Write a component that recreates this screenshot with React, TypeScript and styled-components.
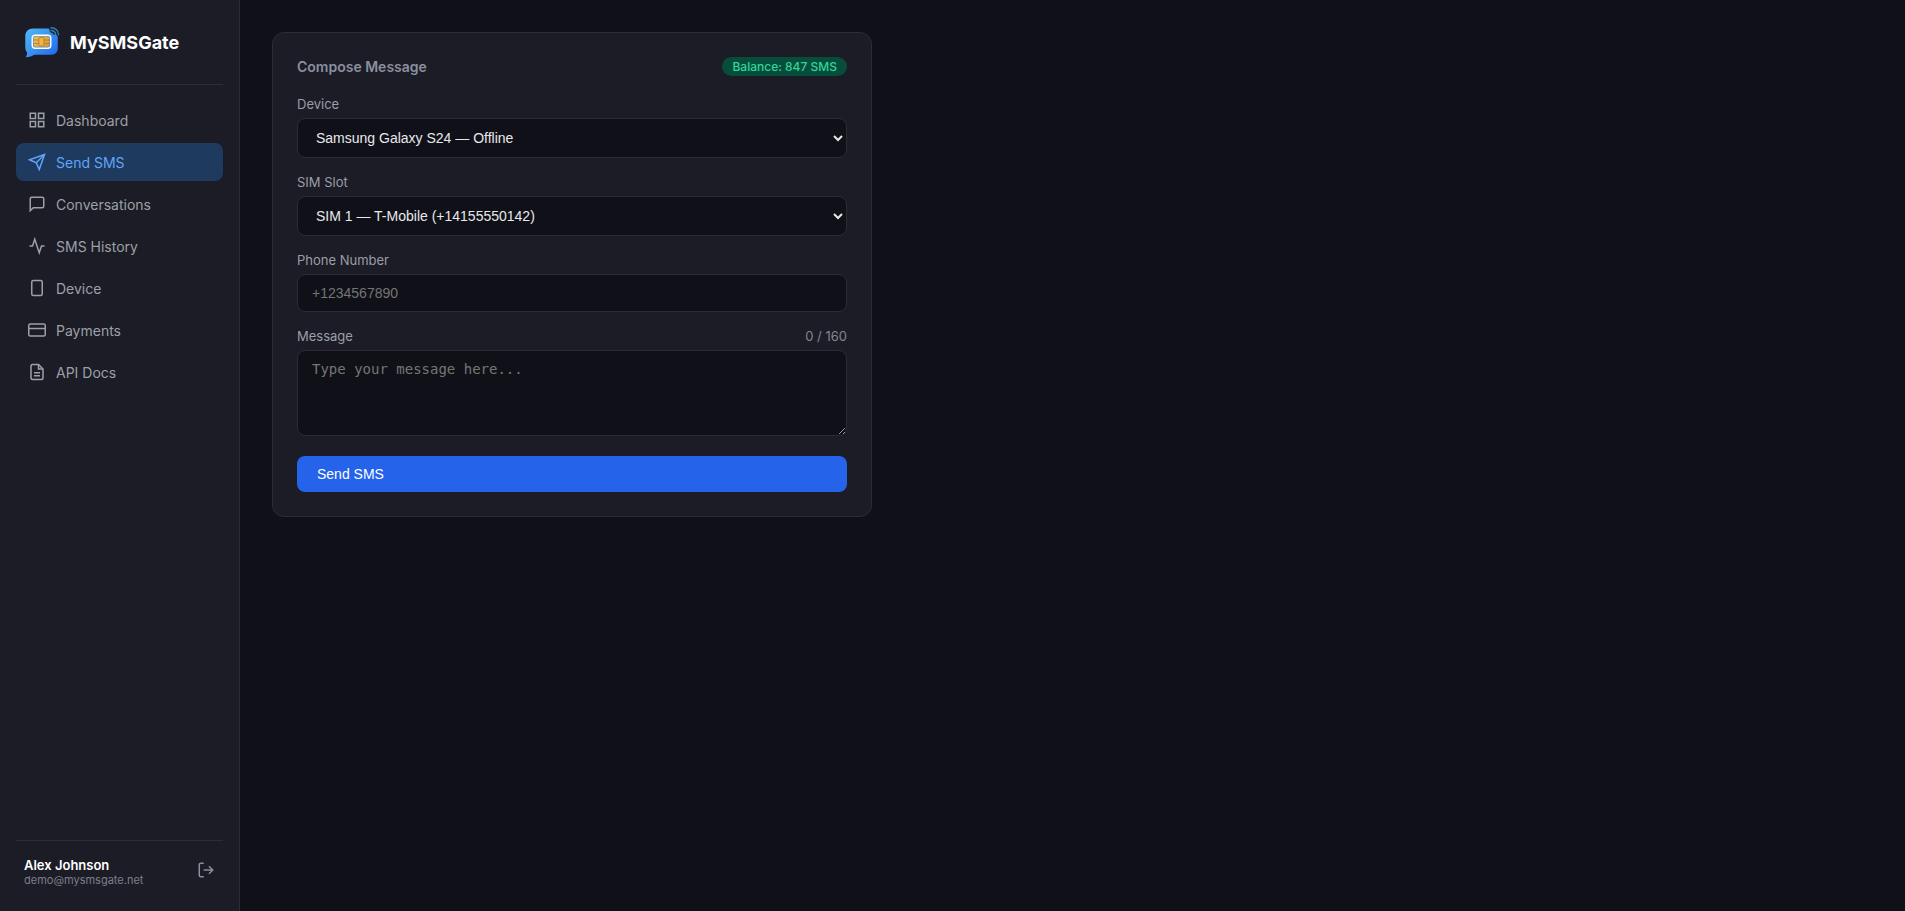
import React, { useState } from 'react';
import styled, { createGlobalStyle } from 'styled-components';

const GlobalStyle = createGlobalStyle`
  *, *::before, *::after { box-sizing: border-box; }
  body {
    margin: 0;
    background: #101118;
    color: #e4e4e7;
    font-family: Inter, "Liberation Sans", sans-serif;
    font-size: 14px;
  }
`;

const Shell = styled.div`
  display: flex;
  min-height: 100vh;
`;

const Sidebar = styled.aside`
  display: flex;
  flex-direction: column;
  flex: 0 0 240px;
  padding: 24px 16px;
  background: #1b1c25;
  border-right: 1px solid #2b2c34;
`;

const Brand = styled.a`
  display: flex;
  align-items: center;
  gap: 10px;
  padding: 0 8px 24px;
  margin-bottom: 16px;
  border-bottom: 1px solid #2b2c34;
  color: #ffffff;
  font-size: 18px;
  font-weight: 700;
  text-decoration: none;
`;

const Nav = styled.nav`
  display: flex;
  flex-direction: column;
  gap: 4px;
  flex: 1;
`;

const NavLink = styled.a<{ $active?: boolean }>`
  display: flex;
  align-items: center;
  gap: 10px;
  padding: 10px 12px;
  border-radius: 8px;
  background: ${(p) => (p.$active ? '#1e3a5f' : 'transparent')};
  color: ${(p) => (p.$active ? '#60a5fa' : '#9ca0a8')};
  font-size: 14px;
  line-height: 17px;
  text-decoration: none;
`;

const Footer = styled.footer`
  display: flex;
  justify-content: space-between;
  align-items: flex-start;
  padding: 16px 8px 0;
  border-top: 1px solid #2b2c34;
`;

const UserName = styled.div`
  color: #ffffff;
  font-size: 13px;
  font-weight: 600;
  line-height: 17px;
`;

const UserEmail = styled.div`
  color: #7b7f8a;
  font-size: 11px;
  line-height: 13px;
`;

const IconButton = styled.button`
  display: flex;
  padding: 4px 0;
  border: 0;
  background: none;
  color: #8b8f9a;
  cursor: pointer;
`;

const Main = styled.main`
  flex: 1;
  min-width: 0;
  padding: 32px;
`;

const Card = styled.form`
  max-width: 600px;
  padding: 24px;
  background: #1b1c25;
  border: 1px solid #2b2c34;
  border-radius: 12px;
`;

const CardHeader = styled.div`
  display: flex;
  justify-content: space-between;
  align-items: center;
  margin-bottom: 20px;
`;

const CardTitle = styled.h1`
  margin: 0;
  color: #8b8f9e;
  font-size: 14px;
  font-weight: 600;
  line-height: 17px;
`;

const Badge = styled.span`
  padding: 2px 10px;
  border-radius: 10px;
  background: #064e3b;
  color: #34d399;
  font-size: 12px;
  font-weight: 500;
  line-height: 15px;
`;

const Field = styled.div`
  display: flex;
  flex-direction: column;
  gap: 5px;
  margin-bottom: 16px;
`;

const LabelRow = styled.div`
  display: flex;
  justify-content: space-between;
  color: #9a9ea8;
  font-size: 13px;
  line-height: 17px;
`;

const Counter = styled.span`
  color: #83868f;
`;

const controlStyle = `
  width: 100%;
  padding: 10px 14px;
  border: 1px solid #2b2c34;
  border-radius: 8px;
  background: #101118;
  color: #e8e8ec;
  font-size: 14px;
  outline: none;
`;

const Select = styled.select`
  ${controlStyle}
  height: 40px;
  font-family: "Liberation Sans", Arial, sans-serif;
`;

const Input = styled.input`
  ${controlStyle}
  height: 38px;
  font-family: "Liberation Sans", Arial, sans-serif;
  &::placeholder { color: #757575; }
`;

const TextArea = styled.textarea`
  ${controlStyle}
  height: 86px;
  margin-bottom: 4px;
  font-family: "DejaVu Sans Mono", monospace;
  resize: vertical;
  &::placeholder { color: #757575; }
`;

const SubmitButton = styled.button`
  display: block;
  width: 100%;
  padding: 10px 20px;
  border: 0;
  border-radius: 8px;
  background: #2563eb;
  color: #ffffff;
  font-family: "Liberation Sans", Arial, sans-serif;
  font-size: 14px;
  font-weight: 500;
  line-height: 16px;
  text-align: left;
  cursor: pointer;
`;

const Icon = ({ children }: { children: React.ReactNode }) => (
  <svg
    width="18"
    height="18"
    viewBox="0 0 24 24"
    fill="none"
    stroke="currentColor"
    strokeWidth="2"
    aria-hidden="true"
  >
    {children}
  </svg>
);

const Logo = () => (
  <svg width="36" height="36" viewBox="0 0 36 36" fill="none" aria-hidden="true">
    <defs>
      <linearGradient id="bubble" x1="4" y1="4" x2="32" y2="32" gradientUnits="userSpaceOnUse">
        <stop stopColor="#4fb9f5" />
        <stop offset="1" stopColor="#2268ee" />
      </linearGradient>
      <linearGradient id="chip" x1="9" y1="12" x2="26" y2="23" gradientUnits="userSpaceOnUse">
        <stop stopColor="#efc060" />
        <stop offset="1" stopColor="#d39a35" />
      </linearGradient>
    </defs>
    <path
      d="M9 4.500h16.200c.2 3.700 2.600 6.100 7.300 6.500.900.800 1.300 1.600 1.300 2.500V24c0 4-2.500 6.700-6.500 6.700H10c-1.600 1.500-4.500 2.300-8.500 2.500 1.300-1.500 1.800-3.200 1.500-5-1-1.200-1.700-2.700-1.700-4.500V12C1.300 7.500 4.500 4.500 9 4.500z"
      fill="url(#bubble)"
    />
    <rect x="8.200" y="11.200" width="18.600" height="13" rx="3" fill="#4a88cc" stroke="#fff" strokeWidth="1.400" />
    <rect x="9.600" y="12.600" width="15.800" height="10.200" rx="2" fill="url(#chip)" />
    <path
      d="M9.600 16h5.200M9.600 19.500h5.200M20 16h5.400M20 19.500h5.400"
      stroke="#9a6a1c"
      strokeWidth=".6"
    />
    <rect x="14.800" y="13.500" width="5.200" height="8.500" rx="1.500" fill="#f0b541" stroke="#9a6a1c" strokeWidth=".6" />
    <path
      d="M27 3.700c4.200-.1 7.300 2.800 7.500 7M27 6.500c2.700 0 4.500 1.700 4.700 4.300"
      stroke="#367fae"
      strokeWidth="1.400"
      strokeLinecap="round"
    />
    <circle cx="28" cy="9.600" r="1" fill="#367fae" />
  </svg>
);

const navItems = [
  {
    label: 'Dashboard',
    icon: (
      <>
        <rect x="3" y="3" width="7" height="7" />
        <rect x="14" y="3" width="7" height="7" />
        <rect x="3" y="14" width="7" height="7" />
        <rect x="14" y="14" width="7" height="7" />
      </>
    ),
  },
  {
    label: 'Send SMS',
    active: true,
    icon: (
      <>
        <path d="M22 2L11 13" />
        <path d="M22 2l-7 20-4-9-9-4 20-7z" />
      </>
    ),
  },
  {
    label: 'Conversations',
    icon: <path d="M21 15a2 2 0 0 1-2 2H7l-4 4V5a2 2 0 0 1 2-2h14a2 2 0 0 1 2 2z" />,
  },
  { label: 'SMS History', icon: <path d="M22 12h-4l-3 9L9 3l-3 9H2" /> },
  { label: 'Device', icon: <rect x="5" y="2" width="14" height="20" rx="2" /> },
  {
    label: 'Payments',
    icon: (
      <>
        <rect x="1" y="4" width="22" height="16" rx="2" />
        <path d="M1 10h22" />
      </>
    ),
  },
  {
    label: 'API Docs',
    icon: (
      <>
        <path d="M14 2H6a2 2 0 0 0-2 2v16a2 2 0 0 0 2 2h12a2 2 0 0 0 2-2V8z" />
        <path d="M14 2v6h6M16 13H8M16 17H8" />
      </>
    ),
  },
];

export default function App() {
  const [message, setMessage] = useState('');

  return (
    <>
      <GlobalStyle />
      <Shell>
        <Sidebar>
          <Brand href="#">
            <Logo />
            MySMSGate
          </Brand>
          <Nav>
            {navItems.map((item) => (
              <NavLink key={item.label} href="#" $active={item.active}>
                <Icon>{item.icon}</Icon>
                {item.label}
              </NavLink>
            ))}
          </Nav>
          <Footer>
            <div>
              <UserName>Alex Johnson</UserName>
              <UserEmail>demo@mysmsgate.net</UserEmail>
            </div>
            <IconButton type="button" aria-label="Log out">
              <Icon>
                <path d="M9 21H5a2 2 0 0 1-2-2V5a2 2 0 0 1 2-2h4" />
                <path d="M16 17l5-5-5-5M21 12H9" />
              </Icon>
            </IconButton>
          </Footer>
        </Sidebar>
        <Main>
          <Card onSubmit={(e) => e.preventDefault()}>
            <CardHeader>
              <CardTitle>Compose Message</CardTitle>
              <Badge>Balance: 847 SMS</Badge>
            </CardHeader>
            <Field>
              <LabelRow>
                <label htmlFor="device">Device</label>
              </LabelRow>
              <Select id="device">
                <option>Samsung Galaxy S24 — Offline</option>
              </Select>
            </Field>
            <Field>
              <LabelRow>
                <label htmlFor="sim">SIM Slot</label>
              </LabelRow>
              <Select id="sim">
                <option>SIM 1 — T-Mobile (+14155550142)</option>
              </Select>
            </Field>
            <Field>
              <LabelRow>
                <label htmlFor="phone">Phone Number</label>
              </LabelRow>
              <Input id="phone" type="tel" placeholder="+1234567890" />
            </Field>
            <Field>
              <LabelRow>
                <label htmlFor="message">Message</label>
                <Counter>{message.length} / 160</Counter>
              </LabelRow>
              <TextArea
                id="message"
                placeholder="Type your message here..."
                value={message}
                onChange={(e) => setMessage(e.target.value)}
              />
            </Field>
            <SubmitButton type="submit">Send SMS</SubmitButton>
          </Card>
        </Main>
      </Shell>
    </>
  );
}
